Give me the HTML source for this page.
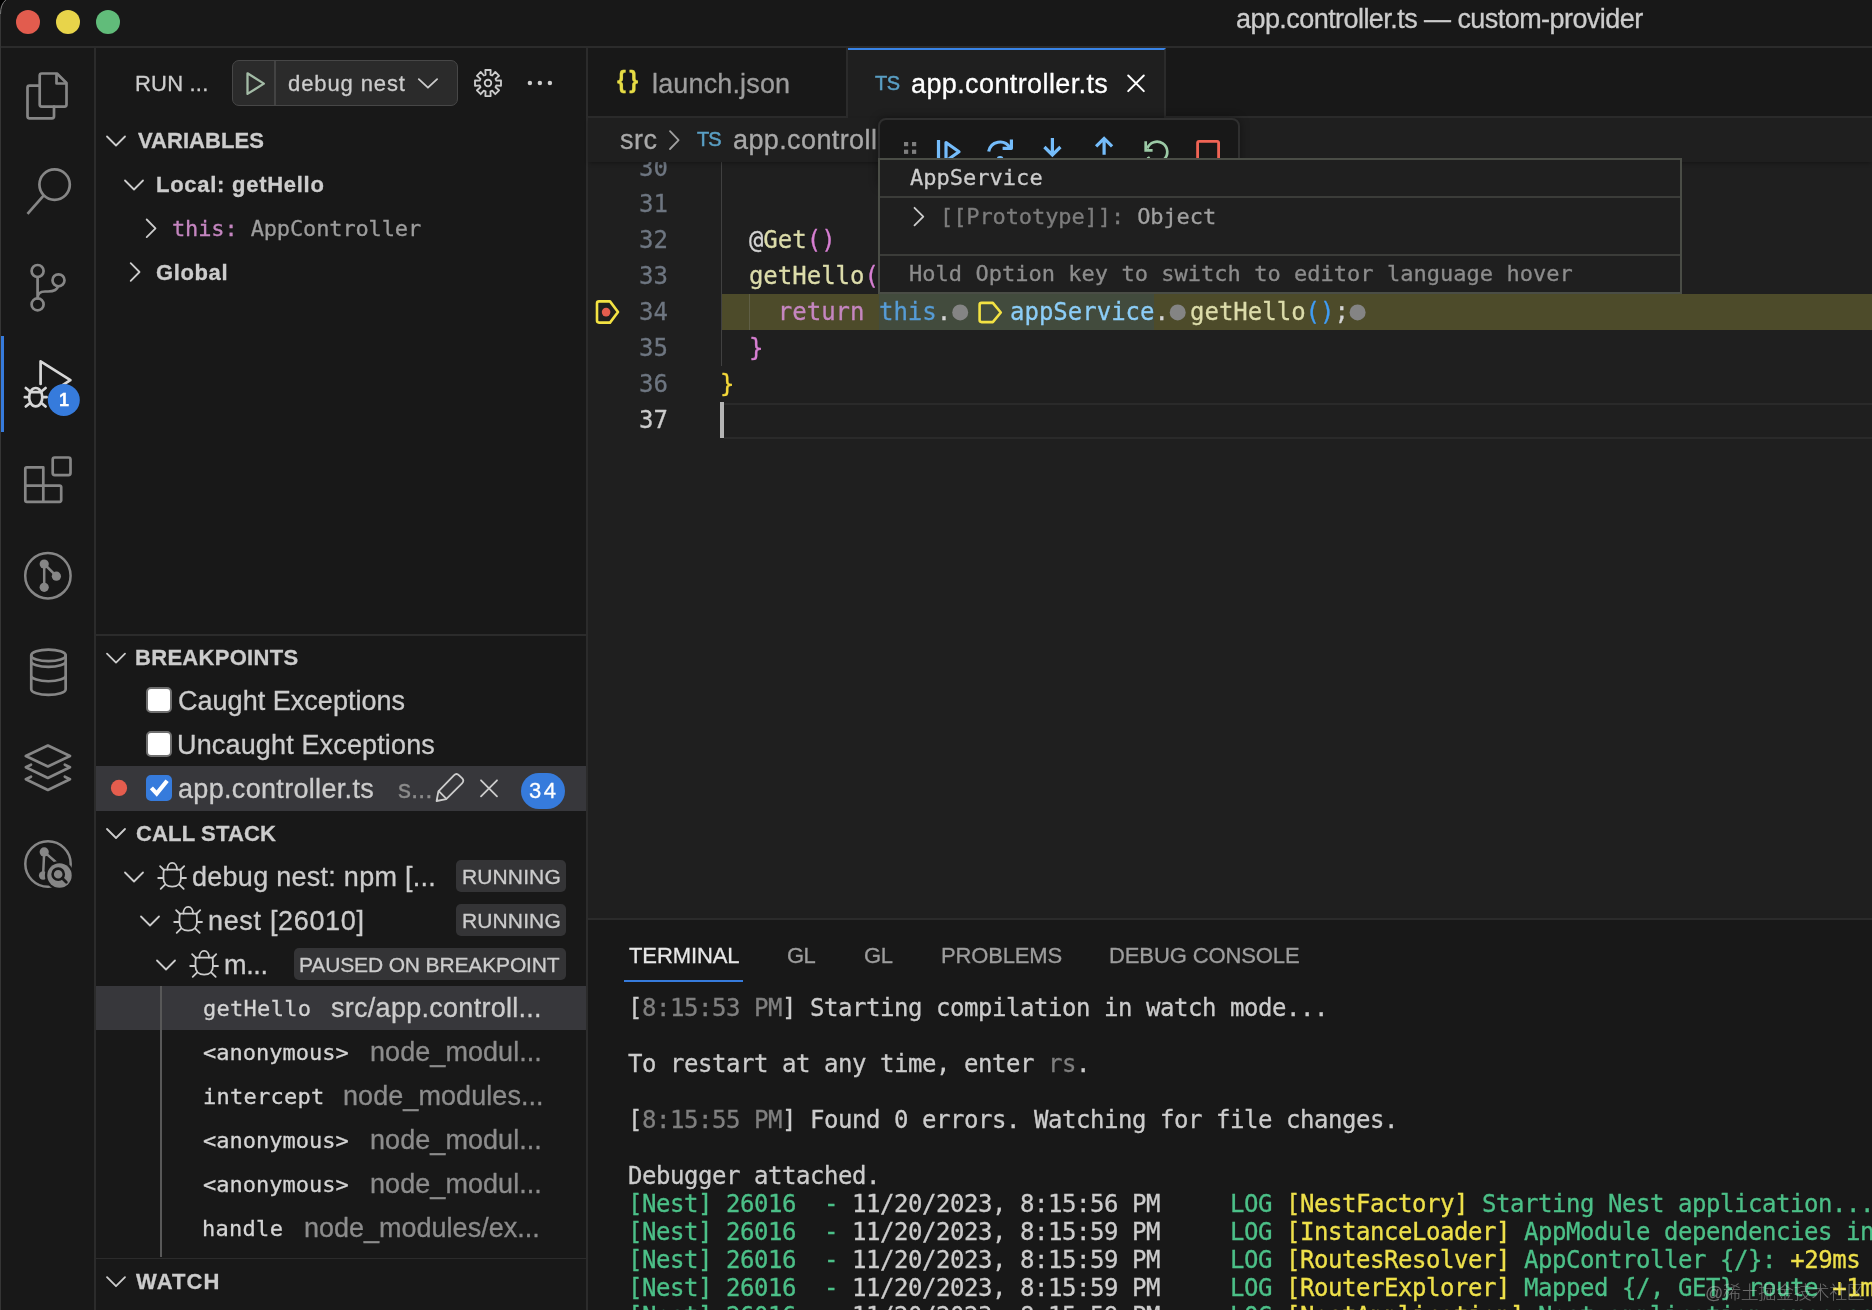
<!DOCTYPE html>
<html lang="en">
<head>
<meta charset="utf-8">
<title>app.controller.ts — custom-provider</title>
<style>
*{box-sizing:border-box;margin:0;padding:0}
html,body{width:1872px;height:1310px;overflow:hidden;background:#181818}
body{position:relative;font-family:"Liberation Sans",sans-serif;color:#cccccc;font-size:26px}
.abs{position:absolute}
.mono{font-family:"DejaVu Sans Mono","Liberation Mono",monospace}
.t{position:absolute;white-space:pre;line-height:1;will-change:transform;-webkit-text-stroke:0.3px}
.mono{-webkit-text-stroke:0.3px}
svg{position:absolute;left:0;top:0;overflow:visible}
.ic{fill:none;stroke:#868686;stroke-width:2.7;stroke-linecap:round;stroke-linejoin:round}
.sb{fill:none;stroke:#cccccc;stroke-width:1.8;stroke-linecap:round;stroke-linejoin:round}
/* title bar */
#titlebar{left:0;top:0;width:1872px;height:48px;background:#181818;border-bottom:2px solid #2b2b2b}
.tl{position:absolute;top:10px;width:24px;height:24px;border-radius:50%}
/* activity bar */
#activity{left:0;top:48px;width:96px;height:1262px;background:#181818;border-right:2px solid #2b2b2b}
#actind{left:0;top:336px;width:4px;height:96px;background:#367bdc}
/* sidebar */
#sidebar{left:96px;top:48px;width:492px;height:1262px;background:#181818;border-right:2px solid #2b2b2b}
.hline{position:absolute;left:96px;width:490px;height:1px;background:#2b2b2b}
.rowsel{position:absolute;left:96px;width:490px;background:#37373b}
.chk{position:absolute;left:146px;width:26px;height:26px;border-radius:5px;background:#ffffff;border:2px solid #6f6f6f}
.pill{position:absolute;background:#343436;border-radius:5px}
#cfgbox{left:232px;top:60px;width:226px;height:46px;background:#2b2b2b;border:1.5px solid #474747;border-radius:7px}
#cfgsep{left:274px;top:61px;width:1.5px;height:44px;background:#434343}
/* editor */
#tabs{left:588px;top:48px;width:1284px;height:70px;background:#181818;border-bottom:2px solid #2b2b2b}
#tab1{left:588px;top:48px;width:260px;height:68px;border-right:2px solid #2b2b2b}
#tab2{left:848px;top:48px;width:318px;height:70px;background:#1f1f1f;border-right:2px solid #2b2b2b;border-top:2px solid #3883e6}
#editor{left:588px;top:118px;width:1284px;height:800px;background:#1f1f1f;overflow:hidden}
#crumbs{left:588px;top:118px;width:1284px;height:44px;background:#1f1f1f}
.cl{-webkit-text-stroke:0.3px;will-change:transform;position:absolute;left:720px;white-space:pre;font-family:"DejaVu Sans Mono","Liberation Mono",monospace;font-size:24px;line-height:36px;height:36px;color:#d4d4d4}
.ln{-webkit-text-stroke:0.3px;will-change:transform;position:absolute;left:588px;width:80px;text-align:right;white-space:pre;font-family:"DejaVu Sans Mono","Liberation Mono",monospace;font-size:24px;line-height:36px;height:36px;color:#6e7681}
.k{color:#c586c0}.th{color:#569cd6}.v{color:#8ccdf7}.f{color:#dcdcaa}.b1{color:#f5d93a}.b2{color:#d77fd2}.b3{color:#3f9df5}
#toolbar{left:878px;top:118px;width:362px;height:70px;background:#181818;border:2px solid #2f2f2f;border-radius:8px;box-shadow:0 0 10px rgba(0,0,0,.4)}
#hover{left:878px;top:158px;width:804px;height:136px;background:#1f1f1f;border:2px solid #4a4d46}
.hsep{position:absolute;left:880px;width:800px;height:2px;background:#3b3c39}
/* panel */
#panel{left:588px;top:918px;width:1284px;height:392px;background:#181818;border-top:2px solid #2b2b2b}
.tm{-webkit-text-stroke:0.3px;will-change:transform;position:absolute;left:628px;white-space:pre;font-family:"DejaVu Sans Mono","Liberation Mono",monospace;font-size:24px;letter-spacing:-0.449px;line-height:28px;height:28px;color:#cccccc}
.g{color:#4cc088}.y{color:#eee04a}.d{color:#7f7f7f}
</style>
</head>
<body>
<!-- ===== title bar ===== -->
<div id="titlebar" class="abs">
  <div class="tl" style="left:16px;background:#e25c4e"></div>
  <div class="tl" style="left:56px;background:#e8d44a"></div>
  <div class="tl" style="left:96px;background:#61bc7a"></div>
</div>
<!-- ===== activity bar ===== -->
<div id="activity" class="abs"></div>
<div id="actind" class="abs"></div>
<div class="abs" style="left:0;top:14px;width:1px;height:1296px;background:#353535"></div>
<svg width="12" height="16" viewBox="0 0 12 16"><path d="M0 0H5.5Q1.2 3 0 9Z" fill="#000"/><path d="M0.5 14Q0.5 4.5 5.8 0" fill="none" stroke="#777" stroke-width="1"/></svg>
<!-- ===== sidebar ===== -->
<div id="sidebar" class="abs"></div>
<div id="cfgbox" class="abs"></div><div id="cfgsep" class="abs"></div>
<div class="hline" style="top:634px;height:2px"></div>
<div class="hline" style="top:1258px;height:1px"></div>
<div class="rowsel" style="top:766px;height:45px"></div>
<div class="rowsel" style="top:986px;height:44px"></div>
<div class="abs" style="left:160px;top:986px;width:2px;height:271px;background:#585858"></div>
<div class="chk" style="top:687px"></div>
<div class="chk" style="top:731px"></div>
<div class="chk" style="top:775px;background:#367bdc;border-color:#367bdc"></div>
<div class="pill" style="left:456px;top:860px;width:110px;height:32px"></div>
<div class="pill" style="left:456px;top:904px;width:110px;height:32px"></div>
<div class="pill" style="left:294px;top:948px;width:272px;height:32px"></div>
<div class="abs" style="left:521px;top:773px;width:44px;height:36px;border-radius:18px;background:#367bdc"></div>
<div class="t mono" id="vthis" style="left:171.5px;top:218px;font-size:22px;letter-spacing:-0.14px;color:#c586c0">this: <span style="color:#9d9d9d">AppController</span></div>
<!-- ===== editor ===== -->
<div id="tabs" class="abs"></div>
<div id="tab1" class="abs"></div>
<div id="tab2" class="abs"></div>
<div id="editor" class="abs"></div>
<!-- code area -->
<div class="abs" style="left:721px;top:294px;width:1151px;height:36px;background:#4d4b2a"></div>
<div class="abs" style="left:879px;top:294px;width:275px;height:36px;background:#424b3d"></div>
<div class="abs" style="left:720.5px;top:161px;width:1px;height:205px;background:#404040"></div>
<div class="abs" style="left:749px;top:294px;width:1px;height:36px;background:#5f5e45"></div>
<div class="abs" style="left:724px;top:402.5px;width:1148px;height:2px;background:#2a2a2a"></div>
<div class="abs" style="left:724px;top:436.5px;width:1148px;height:2px;background:#2a2a2a"></div>
<div class="abs" style="left:720px;top:402px;width:4px;height:36px;background:#b4b4b4"></div>
<div class="ln" style="top:150px">30</div>
<div class="ln" style="top:186px">31</div>
<div class="ln" style="top:222px">32</div>
<div class="ln" style="top:258px">33</div>
<div class="ln" style="top:294px">34</div>
<div class="ln" style="top:330px">35</div>
<div class="ln" style="top:366px">36</div>
<div class="ln" style="top:402px;color:#cccccc">37</div>
<div class="cl" style="top:222px">  @<span class="f">Get</span><span class="b2">()</span></div>
<div class="cl" style="top:258px">  <span class="f">getHello</span><span class="b2">(</span></div>
<div class="cl" style="top:294px">    <span class="k">return</span> <span class="th">this</span>.</div>
<div class="cl" style="top:294px;left:1009.6px"><span class="v">appService</span>.</div>
<div class="cl" style="top:294px;left:1190px"><span class="f">getHello</span><span class="b3">()</span>;</div>
<div class="cl" style="top:330px">  <span class="b2">}</span></div>
<div class="cl" style="top:366px"><span class="b1">}</span></div>
<!-- breadcrumbs -->
<div id="crumbs" class="abs" style="box-shadow:0 2px 4px -1px rgba(0,0,0,.35)"></div>
<div class="t" id="bc2" style="left:732.72px;top:127px;font-size:27px;color:#a9a9a9;letter-spacing:0.39px;">app.controller.ts</div>
<!-- debug toolbar -->
<div id="toolbar" class="abs"></div>
<svg width="1872" height="1310" viewBox="0 0 1872 1310">
  <g fill="#7e7e7e"><rect x="904" y="142" width="4.2" height="4.2"/><rect x="912" y="142" width="4.2" height="4.2"/><rect x="904" y="149.7" width="4.2" height="4.2"/><rect x="912" y="149.7" width="4.2" height="4.2"/></g>
  <g fill="none" stroke="#75bdfb" stroke-width="3.2" stroke-linejoin="round" stroke-linecap="butt">
    <path d="M938.5 140V166"/><path d="M946 142.5L959 151.8L946 161Z"/>
    <path d="M988.7 151.6A11.5 11.5 0 0 1 1009.8 147.5"/><path d="M1011.4 139.6V148.3H1002.6"/>
    <path d="M1052.4 138V153.5M1044.4 147L1052.4 155L1060.4 147" stroke-linejoin="miter"/>
    <path d="M1104.1 139.5V154.8M1096.1 146.4L1104.1 138.4L1112.1 146.4" stroke-linejoin="miter"/>
  </g>
  <circle cx="1000.1" cy="159.3" r="3.4" fill="#75bdfb"/>
  <g fill="none" stroke="#9ccaa6" stroke-width="2.7" stroke-linecap="butt" stroke-linejoin="miter">
    <path d="M1147.3 148.5A10.3 10.3 0 1 1 1147.9 156.8"/><path d="M1145.7 141.3V150.4H1152.6"/>
  </g>
  <rect x="1197.6" y="141.3" width="21" height="22" rx="1.5" fill="none" stroke="#f06455" stroke-width="2.8"/>
</svg>
<!-- hover widget -->
<div id="hover" class="abs"></div>
<div class="hsep" style="top:196px"></div>
<div class="hsep" style="top:254px"></div>
<div class="t mono" id="hv2" style="left:940.2px;top:206px;font-size:22px;letter-spacing:-0.1px;color:#7c7c7c">[[Prototype]]: <span style="color:#a0a0a0">Object</span></div>
<!-- ===== panel ===== -->
<div id="panel" class="abs"></div>
<div class="abs" style="left:624px;top:980px;width:119px;height:2px;background:#367bdc"></div>
<div class="tm" style="top:994px">[<span class="d">8:15:53 PM</span>] Starting compilation in watch mode...</div>
<div class="tm" style="top:1050px">To restart at any time, enter <span class="d">rs</span>.</div>
<div class="tm" style="top:1106px">[<span class="d">8:15:55 PM</span>] Found 0 errors. Watching for file changes.</div>
<div class="tm" style="top:1162px">Debugger attached.</div>
<div class="tm" style="top:1190px"><span class="g">[Nest] 26016  - </span>11/20/2023, 8:15:56 PM <span class="g">    LOG</span> <span class="y">[NestFactory]</span> <span class="g">Starting Nest application...</span></div>
<div class="tm" style="top:1218px"><span class="g">[Nest] 26016  - </span>11/20/2023, 8:15:59 PM <span class="g">    LOG</span> <span class="y">[InstanceLoader]</span> <span class="g">AppModule dependencies in</span></div>
<div class="tm" style="top:1246px"><span class="g">[Nest] 26016  - </span>11/20/2023, 8:15:59 PM <span class="g">    LOG</span> <span class="y">[RoutesResolver]</span> <span class="g">AppController {/}:</span> <span class="y">+29ms</span></div>
<div class="tm" style="top:1274px"><span class="g">[Nest] 26016  - </span>11/20/2023, 8:15:59 PM <span class="g">    LOG</span> <span class="y">[RouterExplorer]</span> <span class="g">Mapped {/, GET} route</span> <span class="y">+1m</span></div>
<div class="tm" style="top:1302px"><span class="g">[Nest] 26016  - </span>11/20/2023, 8:15:59 PM <span class="g">    LOG</span> <span class="y">[NestApplication]</span> <span class="g">Nest application successf</span></div>
<div class="t noink" style="left:1705px;top:1284px;font-size:18px;font-weight:300;-webkit-text-stroke:0;letter-spacing:-0.3px;color:rgba(225,225,225,.42);font-family:'Liberation Sans','Noto Sans CJK SC',sans-serif">@稀土掘金技术社区</div>
<!-- ===== fitted text items ===== -->
<div class="t" id="title" style="left:1235.82px;top:6px;font-size:27px;color:#cccccc;letter-spacing:-0.56px;">app.controller.ts — custom-provider</div>
<div class="t" id="run" style="left:135.04px;top:73px;font-size:22px;color:#cccccc;letter-spacing:0.19px;">RUN ...</div>
<div class="t" id="cfg" style="left:287.73px;top:73px;font-size:22px;color:#cccccc;letter-spacing:0.9px;">debug nest</div>
<div class="t" id="hvar" style="left:137.55px;top:130px;font-size:22px;color:#cccccc;font-weight:700;letter-spacing:0.04px;">VARIABLES</div>
<div class="t" id="local" style="left:155.78px;top:174px;font-size:22px;color:#cccccc;font-weight:700;letter-spacing:0.73px;">Local: getHello</div>
<div class="t" id="global" style="left:155.91px;top:262px;font-size:22px;color:#cccccc;font-weight:700;letter-spacing:0.63px;">Global</div>
<div class="t" id="hbp" style="left:134.98px;top:647px;font-size:22px;color:#cccccc;font-weight:700;letter-spacing:0.3px;">BREAKPOINTS</div>
<div class="t" id="caught" style="left:177.77px;top:688px;font-size:27px;color:#cccccc;letter-spacing:0.03px;">Caught Exceptions</div>
<div class="t" id="uncaught" style="left:177.35px;top:732px;font-size:27px;color:#cccccc;letter-spacing:0.15px;">Uncaught Exceptions</div>
<div class="t" id="bpfile" style="left:178.02px;top:776px;font-size:27px;color:#cccccc;letter-spacing:0.32px;">app.controller.ts</div>
<div class="t" id="bpdir" style="left:398px;top:776px;font-size:26px;color:#8c8c8c;letter-spacing:-0.1px;">s...</div>
<div class="t" id="bpn" style="left:529.03px;top:780px;font-size:22px;color:#ffffff;letter-spacing:2.59px;">34</div>
<div class="t" id="hcs" style="left:136.15px;top:823px;font-size:22px;color:#cccccc;font-weight:700;letter-spacing:0.15px;">CALL STACK</div>
<div class="t" id="cs1" style="left:191.65px;top:864px;font-size:27px;color:#cccccc;letter-spacing:0.27px;">debug nest: npm [...</div>
<div class="t" id="run1" style="left:461.81px;top:866px;font-size:21px;color:#cccccc;letter-spacing:0.12px;">RUNNING</div>
<div class="t" id="cs2" style="left:207.59px;top:908px;font-size:27px;color:#cccccc;letter-spacing:0.67px;">nest [26010]</div>
<div class="t" id="run2" style="left:461.81px;top:910px;font-size:21px;color:#cccccc;letter-spacing:0.12px;">RUNNING</div>
<div class="t" id="cs3" style="left:223.59px;top:952px;font-size:27px;color:#cccccc;letter-spacing:-0.32px;">m...</div>
<div class="t" id="paused" style="left:299.21px;top:954px;font-size:21px;color:#cccccc;letter-spacing:-0.14px;">PAUSED ON BREAKPOINT</div>
<div class="t" id="f1s" style="left:330.64px;top:995px;font-size:27px;color:#cccccc;letter-spacing:0.28px;">src/app.controll...</div>
<div class="t" id="f2s" style="left:369.99px;top:1039px;font-size:27px;color:#8c8c8c;letter-spacing:0.06px;">node_modul...</div>
<div class="t" id="f3s" style="left:343.19px;top:1083px;font-size:27px;color:#8c8c8c;letter-spacing:0.07px;">node_modules...</div>
<div class="t" id="f4s" style="left:369.99px;top:1127px;font-size:27px;color:#8c8c8c;letter-spacing:0.06px;">node_modul...</div>
<div class="t" id="f5s" style="left:369.99px;top:1171px;font-size:27px;color:#8c8c8c;letter-spacing:0.06px;">node_modul...</div>
<div class="t" id="f6s" style="left:303.99px;top:1215px;font-size:27px;color:#8c8c8c;">node_modules/ex...</div>
<div class="t" id="hwatch" style="left:136.4px;top:1271px;font-size:22px;color:#cccccc;font-weight:700;letter-spacing:1.11px;">WATCH</div>
<div class="t" id="tl1" style="left:651.81px;top:71px;font-size:27px;color:#9d9d9d;letter-spacing:0.15px;">launch.json</div>
<div class="t" id="tl2" style="left:911.02px;top:71px;font-size:27px;color:#ffffff;letter-spacing:0.39px;">app.controller.ts</div>
<div class="t" id="ts1" style="left:875.49px;top:73px;font-size:20px;color:#5a9fc4;letter-spacing:-0.56px;-webkit-text-stroke:0.5px #5a9fc4;">TS</div>
<div class="t" id="json1" style="left:616.61px;top:69px;font-size:23px;color:#e6dc45;font-weight:700;letter-spacing:3.39px;">{}</div>
<div class="t" id="bc1" style="left:620.04px;top:127px;font-size:27px;color:#a9a9a9;letter-spacing:0.5px;">src</div>
<div class="t" id="ts2" style="left:696.69px;top:129px;font-size:20px;color:#5a9fc4;letter-spacing:-0.91px;-webkit-text-stroke:0.5px #5a9fc4;">TS</div>
<div class="t" id="pt1" style="left:628.73px;top:945px;font-size:22px;color:#e7e7e7;letter-spacing:-0.11px;">TERMINAL</div>
<div class="t" id="pt2" style="left:787.11px;top:945px;font-size:22px;color:#9d9d9d;letter-spacing:-0.61px;">GL</div>
<div class="t" id="pt3" style="left:864.11px;top:945px;font-size:22px;color:#9d9d9d;letter-spacing:-0.4px;">GL</div>
<div class="t" id="pt4" style="left:940.84px;top:945px;font-size:22px;color:#9d9d9d;letter-spacing:-0.17px;">PROBLEMS</div>
<div class="t" id="pt5" style="left:1108.84px;top:945px;font-size:22px;color:#9d9d9d;letter-spacing:-0.11px;">DEBUG CONSOLE</div>
<div class="t mono" id="f1" style="left:203.39px;top:998px;font-size:22px;color:#d4d4d4;letter-spacing:0.28px;">getHello</div>
<div class="t mono" id="f2" style="left:203.47px;top:1042px;font-size:22px;color:#d4d4d4;letter-spacing:0.01px;">&lt;anonymous&gt;</div>
<div class="t mono" id="f3" style="left:202.98px;top:1086px;font-size:22px;color:#d4d4d4;letter-spacing:0.24px;">intercept</div>
<div class="t mono" id="f4" style="left:203.47px;top:1130px;font-size:22px;color:#d4d4d4;letter-spacing:0.01px;">&lt;anonymous&gt;</div>
<div class="t mono" id="f5" style="left:203.47px;top:1174px;font-size:22px;color:#d4d4d4;letter-spacing:0.01px;">&lt;anonymous&gt;</div>
<div class="t mono" id="f6" style="left:202.09px;top:1218px;font-size:22px;color:#d4d4d4;letter-spacing:0.28px;">handle</div>
<div class="t mono" id="hv1" style="left:910.24px;top:167px;font-size:22px;color:#cccccc;letter-spacing:0.02px;">AppService</div>
<div class="t mono" id="hv3" style="left:909.38px;top:263px;font-size:22px;color:#8c8c8c;letter-spacing:0.03px;">Hold Option key to switch to editor language hover</div>
<!-- ===== icons ===== -->
<svg width="1872" height="1310" viewBox="0 0 1872 1310">
  <!-- activity bar -->
  <g class="ic">
    <path d="M41.7 73.5H57L66.5 83V104.6a2 2 0 0 1-2 2H41.7a2 2 0 0 1-2-2V75.5a2 2 0 0 1 2-2Z"/><path d="M56.5 74.5V83.5H65.5"/>
    <path d="M39.7 85.7H29.5a2 2 0 0 0-2 2V116.3a2 2 0 0 0 2 2H52a2 2 0 0 0 2-2V106.6"/>
    <circle cx="54.6" cy="184.6" r="15.2"/><path d="M43.8 195.4L27.5 213.8" stroke-linecap="butt"/>
    <circle cx="37.6" cy="271" r="6"/><circle cx="58.5" cy="280.3" r="6"/><circle cx="37.6" cy="304.4" r="6"/>
    <path d="M37.6 277V298.4M58 286.3Q57 291.5 48 291.5H45Q37.6 291.5 37.6 298"/>
    <path d="M26.8 467.4H43.3V485.6H59.7a1.5 1.5 0 0 1 1.5 1.5V500.3a1.5 1.5 0 0 1-1.5 1.5H26.8a1.5 1.5 0 0 1-1.5-1.5V468.9a1.5 1.5 0 0 1 1.5-1.5ZM25.3 485.6H43.3V501.8"/>
    <rect x="52.7" y="457.5" width="17.8" height="17.6" rx="2"/>
    <circle cx="47.9" cy="575.7" r="22.7" stroke-width="2.5"/>
    <path d="M44.2 564V587.3M44.2 564L56.4 576.2" stroke-width="2.5"/>
    <ellipse cx="48.45" cy="655.4" rx="17.2" ry="5.75"/>
    <path d="M31.25 655.4V689.2a17.2 5.75 0 0 0 34.4 0V655.4M31.25 661.2a17.2 5.75 0 0 0 34.4 0M31.25 675.5a17.2 5.75 0 0 0 34.4 0"/>
    <path d="M47.9 745.5L70 756L47.9 766.5L25.8 756Z"/><path d="M31 764.7L25.8 767.2L47.9 778L70 767.2L64.8 764.7"/><path d="M31 776.7L25.8 779.2L47.9 790L70 779.2L64.8 776.7"/>
    <circle cx="48" cy="864" r="22.7" stroke-width="2.5"/>
    <path d="M44.2 851.9L43.1 875.5M44.2 851.9L58 864" stroke-width="2.5"/>
  </g>
  <g fill="#868686"><circle cx="44.2" cy="564" r="4.6"/><circle cx="56.4" cy="576.2" r="4.6"/><circle cx="44.2" cy="587.3" r="4.6"/>
    <circle cx="44.2" cy="851.9" r="4.6"/><circle cx="43.1" cy="875.5" r="4.2"/></g>
  <circle cx="59.5" cy="875.5" r="14.6" fill="#181818"/><circle cx="59.5" cy="875.5" r="12.2" fill="#868686"/>
  <circle cx="58.2" cy="874.2" r="5.6" fill="none" stroke="#181818" stroke-width="2.6"/><path d="M62.3 878.3L66.3 882.3" stroke="#181818" stroke-width="2.8" stroke-linecap="round"/>
  <!-- debug (active) -->
  <g fill="none" stroke="#d7d7d7" stroke-width="2.7" stroke-linecap="round" stroke-linejoin="round">
    <path d="M40.6 384V361.3L70.4 380.2L63 384.8"/>
    <ellipse cx="35.7" cy="397.2" rx="6.6" ry="9.2"/>
    <path d="M24.8 397.2H29M42.4 397.2H46.6M25.8 388L30 391.5M45.6 388L41.4 391.5M25.8 406.5L30 403M45.6 406.5L41.4 403M30 392.2H41.4"/>
  </g>
  <circle cx="63.8" cy="400" r="16" fill="#367bdc"/>
  <!-- sidebar header -->
  <path d="M247.5 73.3L263.9 83.6L247.5 93.9Z" fill="none" stroke="#a3bba6" stroke-width="2.3" stroke-linejoin="round"/>
  <path class="sb" d="M418.8 79.2L427.95 87.7L437.1 79.2" stroke-width="2.4"/>
  <path class="sb" d="M485.6 74.8L485.3 70.0L490.7 70.0L490.4 74.8L492.2 75.5L495.3 71.9L499.1 75.8L495.5 78.9L496.3 80.7L501.0 80.3L501.0 85.8L496.3 85.4L495.5 87.2L499.1 90.3L495.3 94.2L492.2 90.6L490.4 91.3L490.7 96.1L485.3 96.1L485.6 91.3L483.8 90.6L480.7 94.2L476.9 90.3L480.5 87.2L479.7 85.4L475.0 85.8L475.0 80.3L479.7 80.7L480.5 78.9L476.9 75.8L480.7 71.9L483.8 75.5Z" stroke-linejoin="miter"/>
  <circle class="sb" cx="488" cy="83.05" r="3.3"/>
  <g fill="#cccccc"><circle cx="529.9" cy="83" r="2.25"/><circle cx="539.85" cy="83" r="2.25"/><circle cx="549.9" cy="83" r="2.25"/></g>
  <!-- tree chevrons -->
  <g class="sb">
    <path d="M107 136.5L116 145.5L125 136.5"/><path d="M125 180.5L134 189.5L143 180.5"/>
    <path d="M107 653.6L116 662.6L125 653.6"/><path d="M107 829L116 838L125 829"/><path d="M107 1277.2L116 1286.2L125 1277.2"/>
    <path d="M125 872.5L134 881.5L143 872.5"/><path d="M141 916.5L150 925.5L159 916.5"/><path d="M157 960.5L166 969.5L175 960.5"/>
    <path d="M146.7 219.5L155.5 228.3L146.7 237.1"/><path d="M130.7 263.2L139.5 272L130.7 280.8"/>
    <path d="M914.5 207.8L923.3 216.6L914.5 225.4"/>
  </g>
  <!-- breakpoint row -->
  <circle cx="119" cy="787.9" r="8.1" fill="#e55d4e"/>
  <path d="M151.4 787.8L156.7 793.6L167.1 780.7" fill="none" stroke="#ffffff" stroke-width="4.2" stroke-linejoin="miter"/>
  <g class="sb"><path d="M453.9 775.3Q456.5 772.7 459.1 775.3L462 778.2Q464.6 780.8 462 783.4L446.2 799.2L436.6 801L438.4 791.4Z"/><path d="M438.8 791.2L446.2 798.6"/>
    <path d="M481 780.3L497 796.3M497 780.3L481 796.3"/></g>
  <!-- call stack bug icons -->
  <g class="sb">
    <path d="M163.8 869.6C163.4 873 163.4 876 163.4 878C163.4 883.5 167 886.7 172.2 886.7C177.4 886.7 181 883.5 181 878C181 876 181 873 180.6 869.6Z"/><path d="M167.4 869.6C167.4 865.5 169.5 862.8 172.2 862.8C174.9 862.8 177 865.5 177 869.6"/>
    <path d="M163.4 878H158.2M181 878H186M163.9 870L160.1 866.2M180.4 870L184.2 866.2M165 884.6L160.7 888.9M179.4 884.6L183.7 888.9"/>
  </g>
  <g class="sb" transform="translate(16 44)">
    <path d="M163.8 869.6C163.4 873 163.4 876 163.4 878C163.4 883.5 167 886.7 172.2 886.7C177.4 886.7 181 883.5 181 878C181 876 181 873 180.6 869.6Z"/><path d="M167.4 869.6C167.4 865.5 169.5 862.8 172.2 862.8C174.9 862.8 177 865.5 177 869.6"/>
    <path d="M163.4 878H158.2M181 878H186M163.9 870L160.1 866.2M180.4 870L184.2 866.2M165 884.6L160.7 888.9M179.4 884.6L183.7 888.9"/>
  </g>
  <g class="sb" transform="translate(32 88)">
    <path d="M163.8 869.6C163.4 873 163.4 876 163.4 878C163.4 883.5 167 886.7 172.2 886.7C177.4 886.7 181 883.5 181 878C181 876 181 873 180.6 869.6Z"/><path d="M167.4 869.6C167.4 865.5 169.5 862.8 172.2 862.8C174.9 862.8 177 865.5 177 869.6"/>
    <path d="M163.4 878H158.2M181 878H186M163.9 870L160.1 866.2M180.4 870L184.2 866.2M165 884.6L160.7 888.9M179.4 884.6L183.7 888.9"/>
  </g>
  <!-- tabs -->
  <path d="M1128.2 75.5L1143.8 91.1M1143.8 75.5L1128.2 91.1" fill="none" stroke="#ffffff" stroke-width="2" stroke-linecap="round"/>
  <path d="M670 131.2L678.6 140.1L670 149" fill="none" stroke="#a0a0a0" stroke-width="1.8" stroke-linecap="round" stroke-linejoin="round"/>
  <!-- editor glyphs -->
  <path d="M599 301.4H610L618 312L610 322.6H599a2 2 0 0 1-2-2V303.4a2 2 0 0 1 2-2Z" fill="none" stroke="#f3e243" stroke-width="2.6" stroke-linejoin="round"/>
  <circle cx="606.1" cy="312.1" r="4.3" fill="#e55d4e"/>
  <path d="M981.6 302.9H992.8L1000.8 312.5L992.8 322.1H981.6a2 2 0 0 1-2-2V304.9a2 2 0 0 1 2-2Z" fill="none" stroke="#f3e243" stroke-width="2.6" stroke-linejoin="round"/>
  <g fill="#848484"><circle cx="960.2" cy="312.4" r="8"/><circle cx="1177.7" cy="312.4" r="8"/><circle cx="1357.6" cy="312.4" r="8"/></g>
</svg>
<div class="t" style="left:58.8px;top:391px;font-size:18px;font-weight:700;color:#ffffff">1</div>

</body>
</html>
